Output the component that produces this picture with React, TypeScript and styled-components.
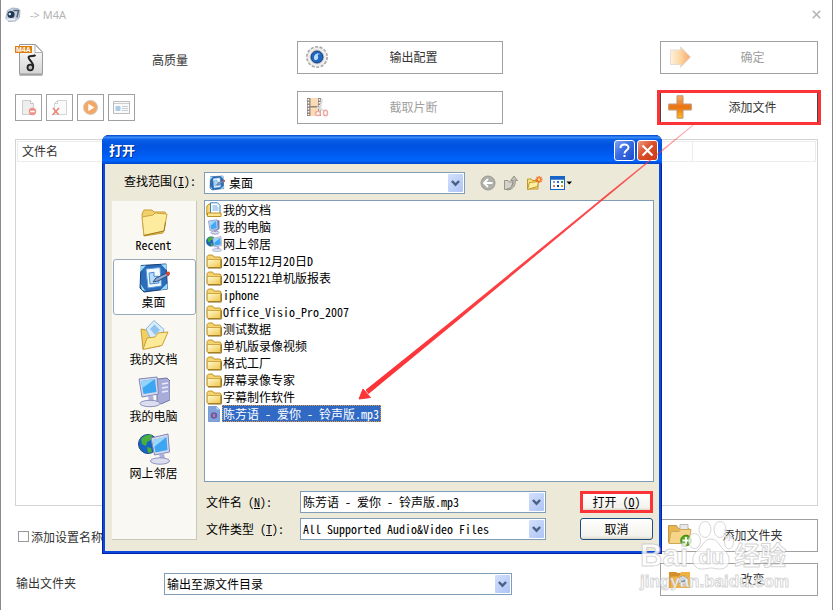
import React from "react";
import styled, { createGlobalStyle, css } from "styled-components";

const GlobalStyle = createGlobalStyle`
  *, *::before, *::after { box-sizing: border-box; }
  body {
    margin: 0;
    background: #fff;
    font-family: "Noto Sans Mono CJK SC", "Noto Sans CJK SC", sans-serif;
    font-size: 12px;
    line-height: 16px;
    color: #333;
  }
  button, input, select { font: inherit; color: inherit; margin: 0; }
  svg { display: block; }
`;

/* ---------- converter window ---------- */

const Page = styled.div`
  position: relative;
  display: flex;
  flex-direction: column;
  min-height: 100vh;
  margin-right: 1px;
  padding: 0 14px 14px;
  border: solid #8a8a8a;
  border-width: 0 1px;
`;

const TitleBar = styled.header`
  display: flex;
  align-items: center;
  gap: 9px;
  height: 29px;
  margin: 0 -4px 0 -10px;
`;

const WindowTitle = styled.h1`
  flex: 1;
  margin: 0;
  font: 11px "Noto Sans", sans-serif;
  color: #b4b4b4;
`;

const CloseWindow = styled.button`
  padding: 0 1px;
  border: 0;
  background: none;
`;

const TopGrid = styled.div`
  display: grid;
  grid-template-columns: 282px 206px 1fr 158px;
  grid-auto-rows: 33px;
  row-gap: 17px;
  align-items: center;
  padding: 12px 0 15px;
`;

const FormatInfo = styled.div`
  display: flex;
  align-items: center;
  gap: 108px;
  padding-top: 4px;
`;

const SmallTools = styled.div`
  display: flex;
  gap: 4px;
`;

const SmallButton = styled.button`
  display: grid;
  place-items: center;
  width: 27px;
  height: 27px;
  padding: 0;
  border: 1px solid #a0a0a0;
  background: #fff;
`;

const ActionButton = styled.button<{ $framed?: boolean; $end?: boolean }>`
  display: flex;
  align-items: center;
  height: 33px;
  padding: 0 4px 2px 7px;
  border: 1px solid #a0a0a0;
  background: #fff;
  color: #333;
  ${(p) => p.$end && css`grid-column: -2;`}
  ${(p) =>
    p.$framed &&
    css`
      height: 29px;
      border-color: #444;
      border-width: 0 1px;
      outline: 3px solid #fc3337;
    `}
  &:disabled { color: #a0a0a0; }
  svg { flex: none; }
`;

const ActionText = styled.span`
  flex: 1;
  text-align: center;
`;

const FilePanel = styled.section`
  flex: 1;
  min-height: 200px;
  padding: 1px;
  border: 1px solid #d3d3d3;
`;

const FileTable = styled.table`
  width: 100%;
  border-collapse: collapse;
`;

const HeadCell = styled.th<{ $narrow?: boolean }>`
  height: 20px;
  padding: 0 4px 2px;
  border: 1px solid #ececec;
  font-weight: 400;
  text-align: left;
  ${(p) => p.$narrow && css`width: 123px;`}
`;

const BottomGrid = styled.div`
  display: grid;
  grid-template-columns: 149px 348px 1fr 158px;
  grid-auto-rows: 33px;
  row-gap: 11px;
  align-items: center;
  padding-top: 13px;
`;

const CheckLabel = styled.label`
  display: flex;
  align-items: center;
  gap: 2px;
  padding: 2px 0 0 3px;
`;

const CheckBox = styled.input`
  appearance: none;
  width: 11px;
  height: 11px;
  border: 1px solid #999;
  background: #fff;
  &:checked { background: #999; }
`;

const FieldLabel = styled.label`
  padding: 7px 0 0 1px;
`;

/* ---------- shared drop-down ---------- */

const ComboBox = styled.span<{ $low?: boolean }>`
  position: relative;
  display: block;
  color: #000;
  ${(p) => p.$low && css`padding-top: 9px;`}
`;

const comboField = css<{ $icon?: boolean }>`
  display: block;
  appearance: none;
  width: 100%;
  height: 22px;
  padding: 0 20px 1px ${(p) => (p.$icon ? 24 : 2)}px;
  border: 1px solid #7f9db9;
  border-radius: 0;
  background: #fff;
  color: #000;
`;
const ComboSelect = styled.select<{ $icon?: boolean }>`${comboField}`;
const ComboInput = styled.input<{ $icon?: boolean }>`
  ${comboField}
  padding-bottom: 2px;
`;

const ComboArrow = styled.span`
  position: absolute;
  right: 2px;
  bottom: 2px;
  display: grid;
  place-items: center;
  width: 15px;
  height: 18px;
  border-radius: 1px;
  background: linear-gradient(135deg, #d3e0fd, #adc4f6);
  pointer-events: none;
`;

const ComboIcon = styled.span`
  position: absolute;
  left: 5px;
  top: 3px;
  pointer-events: none;
`;

const Arrow = () => (
  <ComboArrow>
    <svg width="9" height="7" viewBox="0 0 9 7" fill="none" stroke="#4d6185" strokeWidth="2.4">
      <path d="M.9 1 4.5 4.7 8.1 1" />
    </svg>
  </ComboArrow>
);

/* ---------- open dialog ---------- */

const Dialog = styled.div`
  position: absolute;
  top: 135px;
  left: 101px;
  right: 170px;
  min-width: 480px;
  padding: 0 3px 3px;
  border-radius: 7px 7px 0 0;
  background: #0a48de;
  box-shadow: inset 0 0 0 1px #0023a8;
  color: #000;
`;

const DialogTitle = styled.header`
  display: flex;
  align-items: center;
  gap: 2px;
  height: 29px;
  margin: 0 -3px;
  padding: 2px 4px 0 7px;
  border-radius: 7px 7px 0 0;
  background: linear-gradient(#0046c8 0, #3b8cf8 8%, #0a5fe8 16%, #0052e0 35%, #0058ec 60%, #0066fe 88%, #0045ca 100%);
`;

const DialogName = styled.h2`
  flex: 1;
  margin: 0;
  padding-bottom: 2px;
  font-size: 13px;
  font-weight: 700;
  color: #fff;
  text-shadow: 1px 1px #002a8a;
`;

const CaptionButton = styled.button<{ $close?: boolean }>`
  display: grid;
  place-items: center;
  width: 21px;
  height: 21px;
  padding: 0;
  border: 1px solid #fff;
  border-radius: 3px;
  background: ${(p) =>
    p.$close
      ? "linear-gradient(135deg, #ec9a82, #dd4f2a 45%, #c43a12)"
      : "linear-gradient(135deg, #7ea4f3, #3a6ce4 45%, #1e4bc8)"};
`;

const DialogBody = styled.div`
  display: grid;
  grid-template-columns: 85px 1fr;
  column-gap: 7px;
  row-gap: 6px;
  padding: 8px 5px 11px 7px;
  background: #ece9d8;
`;

const LookLabel = styled.label`
  padding: 1px 0 0 12px;
  white-space: nowrap;
`;

const LookRow = styled.div`
  display: flex;
  align-items: center;
  gap: 15px;
`;

const LookCombo = styled.div`
  flex: 0 1 261px;
`;

const Tools = styled.div`
  display: flex;
  align-items: center;
  gap: 7px;
`;

const ToolButton = styled.button`
  padding: 0;
  border: 0;
  background: none;
`;

const Places = styled.nav`
  display: flex;
  flex-direction: column;
  gap: 1px;
  margin-top: 1px;
  padding: 1px 0 0 1px;
  border: solid #c9c6ba;
  border-width: 0 1px 1px 0;
  background: #f9f8f3;
`;

const Place = styled.button<{ $current?: boolean }>`
  display: flex;
  flex-direction: column;
  align-items: center;
  height: 56px;
  padding: 2px 2px 0 0;
  border: 1px solid ${(p) => (p.$current ? "#98a9bb" : "transparent")};
  border-radius: 3px;
  background: ${(p) => (p.$current ? "#fff" : "none")};
  color: #000;
`;

const Main = styled.div`
  min-width: 0;
`;

const FileList = styled.ul`
  height: 282px;
  margin: 0;
  padding: 0 1px;
  overflow: auto;
  border: 1px solid #7f9db9;
  background: #fff;
  list-style: none;
`;

const FileItem = styled.li`
  display: flex;
  align-items: center;
  height: 17px;
`;

const FileName = styled.span<{ $selected?: boolean }>`
  padding: 0 2px 0 1px;
  line-height: 17px;
  white-space: pre;
  ${(p) =>
    p.$selected &&
    css`
      background: #316ac5;
      color: #fff;
      outline: 1px dotted #e0963a;
      outline-offset: -1px;
    `}
`;

const FileForm = styled.form`
  display: grid;
  grid-template-columns: 94px 1fr 73px;
  align-items: center;
  row-gap: 5px;
  padding: 9px 1px 0 2px;
`;

const FormButton = styled.button<{ $framed?: boolean }>`
  height: 22px;
  padding: 0;
  border: 1px solid #1c4f80;
  border-radius: 3px;
  background: linear-gradient(#fff, #f3f2ec 85%, #dcd8cb);
  color: #000;
  ${(p) =>
    p.$framed &&
    css`
      border: 3px solid #fc3337;
      border-radius: 0;
      line-height: 14px;
    `}
`;

const FormField = styled.div`
  min-width: 0;
  margin-right: 34px;
`;

/* ---------- overlays ---------- */

const Pointer = styled.svg`
  position: absolute;
  top: 120px;
  left: 349px;
  pointer-events: none;
`;

const Watermark = styled.div`
  position: absolute;
  right: 32px;
  bottom: 17px;
  width: 160px;
  font-family: "Liberation Sans", "Noto Sans CJK SC", sans-serif;
  font-weight: 700;
  color: rgba(255, 255, 255, 0.85);
  -webkit-text-stroke: 1px rgba(185, 185, 185, 0.6);
  pointer-events: none;
`;

const BrandLine = styled.div`
  display: flex;
  align-items: flex-end;
  font-size: 31px;
  line-height: 30px;
`;

const Paw = styled.div`
  position: relative;
  width: 46px;
  height: 50px;
`;

const PawText = styled.span`
  position: absolute;
  inset: 25px 0 0;
  font-size: 21px;
  line-height: 22px;
  text-align: center;
`;

const BrandCjk = styled.span`
  font-size: 26px;
`;

const SiteLine = styled.div`
  font-size: 17px;
  line-height: 22px;
`;

/* ---------- icons ---------- */

const AppIcon = () => (
  <svg width="16" height="16" viewBox="0 0 16 16">
    <path d="M.8 11 2.500 3.500 7 1l6 .5 2 2-.5 7-4 3.500-7 .5z" fill="#c6d1de" stroke="#93a1b2" strokeWidth=".7" />
    <circle cx="6" cy="7.500" r="3.600" fill="#213652" />
    <circle cx="4.800" cy="7" r="1.300" fill="#dbe8f5" />
    <path d="M8.500 3.500h5l-1.500 7" fill="none" stroke="#4d6078" strokeWidth="1.500" />
    <path d="M2 12.500h8" stroke="#eef3f8" strokeWidth="1.500" />
  </svg>
);

const M4aIcon = () => (
  <svg width="29" height="32" viewBox="0 0 29 32">
    <defs>
      <linearGradient id="sheet" x1="0" y1="0" x2="0" y2="1">
        <stop offset="0" stopColor="#fff" />
        <stop offset="1" stopColor="#d4d4d4" />
      </linearGradient>
    </defs>
    <path d="M4.500.5h16l7 7.500v22h-23z" fill="url(#sheet)" stroke="#9a9a9a" />
    <path d="M4.500 31h23" stroke="#777" />
    <path d="M20 .8v7.700h7.500z" fill="#fff" stroke="#b0b0b0" />
    <path d="M20.500 11c-2 1.800-4.500.2-6.500 1.500-1.500 1.500 1 3.500 2.500 5.500 1.500 2 2 4 1.500 5.500" fill="none" stroke="#222" strokeWidth="2" />
    <circle cx="15.300" cy="23.500" r="2.800" fill="#bbb" stroke="#222" strokeWidth="1.800" />
    <rect y="2" width="17" height="7" fill="#e07d0c" />
    <text x="1" y="8" fontFamily="Liberation Sans" fontWeight="700" fontSize="7" fill="#fff">M4A</text>
  </svg>
);

const RemoveIcon = () => (
  <svg width="17" height="17" viewBox="0 0 17 17">
    <path d="M2.500 1.500h8l3 3v11h-11z" fill="#eee" stroke="#ccc" />
    <path d="M10.500 1.500v3h3" fill="#fff" stroke="#c4c4c4" />
    <circle cx="12.500" cy="12.500" r="3.700" fill="#ee9083" />
    <path d="M10.300 12.500h4.400" stroke="#fff" strokeWidth="1.600" />
  </svg>
);
const ClearIcon = () => (
  <svg width="17" height="17" viewBox="0 0 17 17">
    <path d="M3.500 4.500l3-3h9v14h-12z" fill="#fafafa" stroke="#d4d4d4" />
    <path d="M3.500 4.500h3v-3" fill="none" stroke="#d0d0d0" />
    <path d="m2 9 5.500 6.500M8 9l-6.500 7" stroke="#ee8073" strokeWidth="1.500" />
  </svg>
);
const PlayIcon = () => (
  <svg width="17" height="17" viewBox="0 0 17 17">
    <circle cx="8.500" cy="8.500" r="7" fill="#f5a765" stroke="#d2c7be" />
    <path d="M6.300 4.700v7.600l6-3.800z" fill="#fff" />
  </svg>
);
const InfoIcon = () => (
  <svg width="17" height="17" viewBox="0 0 17 17">
    <path d="M.5 2.500h16v12H.5z" fill="#fafafa" stroke="#bbb" />
    <path d="M1 4.500h15" stroke="#ccc" />
    <rect x="2.500" y="7" width="5" height="5" rx="1" fill="#a9cde8" />
    <path d="M9 7.500h6M9 9.500h6M9 11.500h6" stroke="#c5cdd5" />
  </svg>
);
const GearIcon = () => (
  <svg width="24" height="24" viewBox="0 0 24 24">
    <circle cx="12" cy="12" r="10.200" fill="#e9e9e9" stroke="#aaa" strokeWidth="1.600" strokeDasharray="3 1.580" />
    <circle cx="12" cy="12" r="9" fill="#f0f0f0" />
    <circle cx="12" cy="12" r="7.400" fill="#d5d5d5" />
    <circle cx="12" cy="12" r="6" fill="#1f66c0" stroke="#16417c" />
    <path d="M9 13.500c-.5-3.500 2.500-6 6-4.500-2 0-2.500 1.200-2 2.500.4 1.400 0 3-1.600 3.600C10 15.500 9.200 14.800 9 13.500" fill="#b9dcfa" />
  </svg>
);
const FilmIcon = () => (
  <svg width="24" height="24" viewBox="0 0 24 24" opacity=".75">
    <rect x="2" y="3" width="14" height="18" fill="#6b5d55" />
    <path d="M3.500 4v16M14.500 4v16" stroke="#fff" strokeWidth="1.500" strokeDasharray="1.500 1.500" />
    <rect x="5.500" y="3" width="7.500" height="8" fill="#fcd09c" />
    <rect x="5.500" y="12.500" width="7.500" height="8.500" fill="#fcd09c" />
    <path d="m17 4-2.500 12M12 12l8 4.500" stroke="#d0d0d0" strokeWidth="1.800" />
    <g fill="#fff" stroke="#e88d84" strokeWidth="1.500">
      <ellipse cx="13" cy="18.500" rx="2.500" ry="2" />
      <ellipse cx="20.500" cy="18" rx="2" ry="2.800" />
    </g>
  </svg>
);
const OkIcon = () => (
  <svg width="24" height="24" viewBox="0 0 24 24">
    <defs>
      <linearGradient id="ok">
        <stop offset="0" stopColor="#fff1dd" />
        <stop offset=".5" stopColor="#fcd6a0" />
        <stop offset="1" stopColor="#f7a36b" />
      </linearGradient>
    </defs>
    <path d="M2.500 5h10V1.800L22.500 12l-10 10.500V19.500h-10z" fill="url(#ok)" stroke="#e6ddd6" />
  </svg>
);
const PlusIcon = () => (
  <svg width="24" height="24" viewBox="0 0 24 24">
    <defs>
      <linearGradient id="plus" x1="0" y1="0" x2="0" y2="1">
        <stop offset="0" stopColor="#fbb06a" />
        <stop offset=".5" stopColor="#ea7210" />
        <stop offset="1" stopColor="#fdbb21" />
      </linearGradient>
    </defs>
    <path d="M9 .8h6V9h8.300v6H15v8.200H9V15H.7V9H9z" fill="url(#plus)" stroke="#bd9678" />
  </svg>
);
const FolderPlusIcon = () => (
  <svg width="24" height="24" viewBox="0 0 24 24">
    <path d="M.5 2.500h8l2 3H21v14H.5z" fill="#e9b550" stroke="#c39a4a" />
    <path d="M12 1.500h8v8h-8z" fill="#e8e8e8" stroke="#bbb" />
    <path d="M3 8.500h8l1.500-2H23l-2.500 14H1z" fill="#f6d488" stroke="#cfa855" />
    <circle cx="18" cy="17.500" r="5.300" fill="#5aab1c" stroke="#3d8312" />
    <path d="M18 14v7M14.500 17.500h7" stroke="#fff" strokeWidth="2" />
  </svg>
);
const FolderGearIcon = () => (
  <svg width="24" height="24" viewBox="0 0 24 24">
    <path d="M1 5h7l1.500 1H22v15H1z" fill="#d48f2c" />
    <path d="M3 9.500h8L13 5h9v16H2z" fill="#f1b13f" />
    <circle cx="15" cy="13.500" r="4.500" fill="#dedede" stroke="#8f8f8f" strokeDasharray="2 1" />
    <circle cx="15" cy="13.500" r="2" fill="#4a78b0" />
  </svg>
);

const DesktopIcon = ({ size = 16 }: { size?: number }) => (
  <svg width={size} height={size} viewBox="0 0 32 32">
    <path d="M3 3.500 28 2l1.500 25L6 30 2 26z" fill="#2a6cb8" stroke="#173f7a" />
    <path d="M2 10V4l6-.5zM23 2.500l5.500-.3.300 6zM2.500 22l5 7L4 28zM29.500 21v6l-7 1z" fill="#9fdcf8" />
    <path d="m8 7 14-1.500 1.500 18.500L10 26z" fill="#f2faff" stroke="#5a97d8" />
    <path d="m11 11 5-.7v4h5V21l-9 1z" fill="#b9dcfa" stroke="#4a8ccf" />
    <path d="m15 20 3-4 11-5 2 2-11 6z" fill="#8fa9cf" stroke="#274f86" />
    <circle cx="30" cy="11.500" r="2" fill="#d8442b" />
  </svg>
);

const FolderIcon = ({ size = 16 }: { size?: number }) => (
  <svg width={size} height={size} viewBox="0 0 32 32">
    <defs>
      <linearGradient id="folder" x1="0" y1="0" x2="1" y2="1">
        <stop offset="0" stopColor="#fffbd0" />
        <stop offset="1" stopColor="#f0c44a" />
      </linearGradient>
    </defs>
    <path d="M2 27V7l3-3h8l3 4h12l2 2v17l-2 2H4z" fill="#f4d470" stroke="#b98a1c" strokeWidth="1.800" />
    <path d="M2.500 27V13h27v14l-2 2h-24z" fill="url(#folder)" stroke="#c2932a" strokeWidth="1.500" />
    <path d="M4 30h26.500V13" fill="none" stroke="#7c5c0c" strokeWidth="1.800" />
  </svg>
);

const BigFolderIcon = () => (
  <svg width="32" height="32" viewBox="0 0 32 32">
    <path d="M4 9 6 5h8l2 2h11l1 3-3 18-19 3z" fill="#f2d06c" stroke="#c99c34" />
    <path d="m4 12 11-2 2-2 12 1-3 17-20 4.500z" fill="#fdeb9e" stroke="#cfa540" />
    <path d="m6 30.500 20-4.500 1.500-9" fill="none" stroke="#a57c1c" />
  </svg>
);

const DocsIcon = () => (
  <svg width="32" height="32" viewBox="0 0 32 32">
    <path d="m3 10 5 1 3 3 10-4 5 3-4 14L5 30z" fill="#f2cf63" stroke="#c49a34" />
    <path d="m8 10 8-8.500 10 9-4 12-10-4z" fill="#d8ecfc" stroke="#8fb6d8" />
    <path d="m12 10 4.500-4.500L22 11l-5 5z" fill="#8fc2ec" />
    <path d="M5 30.500 9 19l8-1 3-4 10-1-6 13.500z" fill="#fdea98" stroke="#c99e38" />
  </svg>
);

const PcIcon = () => (
  <svg width="32" height="32" viewBox="0 0 32 32">
    <path d="m19 3 10-1 3 3v19l-9 4-4-2z" fill="#a7acd8" stroke="#7278aa" />
    <path d="m24 8 6-1M24 12l6-1M24 16l6-1" stroke="#e9ebfa" strokeWidth="1.500" />
    <path d="m1 3 18-2 1.500 17L4 21z" fill="#d7d9ee" stroke="#7f86b8" />
    <path d="m3 5 14-2 1.500 13L5.500 18z" fill="#3ca6f2" />
    <path d="m3 5 14-2L4.500 12z" fill="#92d4fb" />
    <path d="m10 20 5-.500 1 6h-5z" fill="#aeb2da" />
    <ellipse cx="12" cy="27.500" rx="10" ry="3.200" fill="#dcdef0" stroke="#8d93be" />
  </svg>
);

const PcSmall = () => (
  <svg width="16" height="16" viewBox="0 0 16 16">
    <path d="m11 1 2.500.5V10L10 12z" fill="#6f78b8" />
    <path d="M2.500 2 11 .8l1 9.200-8 1.500z" fill="#d5dcf2" stroke="#8a93c4" strokeWidth=".8" />
    <path d="m3.800 3 6.200-1 .8 7.200-5.800 1z" fill="#41a8f2" />
    <path d="m3.800 3 6.200-1-5.600 5z" fill="#9ad8fb" />
    <ellipse cx="9" cy="13.500" rx="4" ry="1.700" fill="#dcdef0" stroke="#8288b5" strokeWidth=".8" />
    <path d="M8 11h2v2H8z" fill="#9ba1ce" />
  </svg>
);

const NetworkIcon = ({ size = 32 }: { size?: number }) => (
  <svg width={size} height={size} viewBox="0 0 32 32">
    <circle cx="10" cy="11" r="9.500" fill="#1765c0" stroke="#174a8c" />
    <path d="M3 6c3-4 8-5 11-4l-1 5-4 2-1 4-4-2zM9 14l4 1 1 4-4 1z" fill="#49b03c" />
    <path d="m13 5 17-4 1.500 18-15 3z" fill="#d7d9ee" stroke="#7f86b8" />
    <path d="m15 7 13.500-3 1 13L17.500 19.500z" fill="#3ca6f2" />
    <path d="M15 7 28.500 4 16 14z" fill="#9ad8fb" />
    <path d="m21 21 5-1 1 6h-5z" fill="#aeb2da" />
    <ellipse cx="22" cy="28" rx="9.500" ry="3.200" fill="#dcdef0" stroke="#8d93be" />
  </svg>
);

const DocFolderSmall = () => (
  <svg width="16" height="16" viewBox="0 0 16 16">
    <path d="M.8 4 3 2h3v12H2l-1.200-1z" fill="#f6da78" stroke="#bd901f" />
    <path d="M4.500.8h7l2.500 2.500v9H4.500z" fill="#fff" stroke="#3d7fc4" />
    <path d="M6.500 4h5M6.500 6h6M6.500 8h6" stroke="#68a5df" />
    <path d="M1.500 14.500V11H15v3.500z" fill="#fbe590" stroke="#bd901f" />
  </svg>
);

const AudioSmall = () => (
  <svg width="16" height="16" viewBox="0 0 16 16">
    <path d="M2.500.5h8l3 3v12h-11z" fill="#7fa3dc" stroke="#7f9ccc" />
    <path d="M10.500.5v3h3z" fill="#c9dbf5" />
    <circle cx="8" cy="9.500" r="3.300" fill="#735b9d" />
    <path d="M8 8v3" stroke="#c7b3dc" />
  </svg>
);

const BackIcon = () => (
  <svg width="16" height="16" viewBox="0 0 16 16">
    <circle cx="8" cy="8" r="7" fill="#b0b0aa" stroke="#999992" />
    <path d="M12.500 8H4.500M8 4 4 8l4 4" fill="none" stroke="#fff" strokeWidth="1.800" />
  </svg>
);
const UpIcon = () => (
  <svg width="16" height="16" viewBox="0 0 16 16">
    <path d="M1.500 14.500v-9H5L6 7h4l-2 7z" fill="#d4d3c9" stroke="#96958b" />
    <path d="M4 14c5-1 6-3.500 6-8.500H7.500L11 1l3.500 4.500h-2.200C12.500 11 10 14.500 4 15z" fill="#c0bfb5" stroke="#86857c" strokeWidth=".8" />
  </svg>
);
const NewFolderIcon = () => (
  <svg width="17" height="16" viewBox="0 0 17 16">
    <path d="M1.500 14V4h4l1 1.500H12V14z" fill="#f8e07c" stroke="#c29827" />
    <path d="m1.500 14.500 2-7 9-1-1 5z" fill="#fdf0a5" stroke="#c29827" />
    <path d="M13 1v7M9.500 4.500h7M10.500 2l5 5M15.500 2l-5 5" stroke="#f26a29" strokeWidth="1.300" />
    <circle cx="13" cy="4.500" r="1.200" fill="#ffe36a" />
  </svg>
);
const ViewIcon = () => (
  <svg width="22" height="16" viewBox="0 0 22 16">
    <rect x=".5" y="1.500" width="14" height="13" fill="#fff" stroke="#1764c8" />
    <path d="M0 3h15" stroke="#1764c8" strokeWidth="3.500" />
    <path d="M3 7h2" stroke="#8a9bc0" strokeWidth="2" />
    <path d="M3 11h2" stroke="#e0795c" strokeWidth="2" />
    <path d="M7 7h2" stroke="#2b6cce" strokeWidth="2" />
    <path d="M7 11h2" stroke="#0c3aa2" strokeWidth="2" />
    <path d="M11 7h2" stroke="#2f9c3a" strokeWidth="2" />
    <path d="M11 11h2" stroke="#d8a318" strokeWidth="2" />
    <path d="M16.500 6.500h5.500l-2.700 3z" fill="#000" />
  </svg>
);

/* ---------- data ---------- */

const files = [
  { name: "我的文档", icon: <DocFolderSmall /> },
  { name: "我的电脑", icon: <PcSmall /> },
  { name: "网上邻居", icon: <NetworkIcon size={16} /> },
  ...[
    "2015年12月20日D",
    "20151221单机版报表",
    "iphone",
    "Office_Visio_Pro_2007",
    "测试数据",
    "单机版录像视频",
    "格式工厂",
    "屏幕录像专家",
    "字幕制作软件",
  ].map((name) => ({ name, icon: <FolderIcon /> })),
  { name: "陈芳语 - 爱你 - 铃声版.mp3", icon: <AudioSmall />, selected: true },
] as { name: string; icon: React.ReactNode; selected?: boolean }[];

const places = [
  { name: "Recent", icon: <BigFolderIcon /> },
  { name: "桌面", icon: <DesktopIcon size={32} />, current: true },
  { name: "我的文档", icon: <DocsIcon /> },
  { name: "我的电脑", icon: <PcIcon /> },
  { name: "网上邻居", icon: <NetworkIcon /> },
] as { name: string; icon: React.ReactNode; current?: boolean }[];

const OpenDialog = () => (
  <Dialog role="dialog" aria-labelledby="open-title">
    <DialogTitle>
      <DialogName id="open-title">打开</DialogName>
      <CaptionButton aria-label="帮助">
        <svg width="13" height="15" viewBox="0 0 13 15" fill="none" stroke="#fff" strokeWidth="2">
          <path d="M2.500 5c0-4.500 8-4.500 8-.5 0 2.700-4 3-4 6M6.500 12v2" />
        </svg>
      </CaptionButton>
      <CaptionButton $close aria-label="关闭">
        <svg width="13" height="13" viewBox="0 0 13 13" stroke="#fff" strokeWidth="2.200">
          <path d="m1.500 1.500 10 10M11.500 1.500l-10 10" />
        </svg>
      </CaptionButton>
    </DialogTitle>
    <DialogBody>
      <LookLabel htmlFor="look-in">查找范围(<u>I</u>):</LookLabel>
      <LookRow>
        <LookCombo>
          <ComboBox>
            <ComboSelect $icon id="look-in"><option>桌面</option></ComboSelect>
            <ComboIcon><DesktopIcon /></ComboIcon>
            <Arrow />
          </ComboBox>
        </LookCombo>
        <Tools>
          <ToolButton aria-label="后退"><BackIcon /></ToolButton>
          <ToolButton aria-label="向上"><UpIcon /></ToolButton>
          <ToolButton aria-label="新建文件夹"><NewFolderIcon /></ToolButton>
          <ToolButton aria-label="查看"><ViewIcon /></ToolButton>
        </Tools>
      </LookRow>
      <Places>
        {places.map((p) => (
          <Place key={p.name} $current={p.current}>{p.icon}{p.name}</Place>
        ))}
      </Places>
      <Main>
        <FileList>
          {files.map((f) => (
            <FileItem key={f.name}>
              {f.icon}
              <FileName $selected={f.selected}>{f.name}</FileName>
            </FileItem>
          ))}
        </FileList>
        <FileForm onSubmit={(e) => e.preventDefault()}>
          <label htmlFor="file-name">文件名 (<u>N</u>):</label>
          <FormField>
            <ComboBox>
              <ComboInput id="file-name" defaultValue="陈芳语 - 爱你 - 铃声版.mp3" />
              <Arrow />
            </ComboBox>
          </FormField>
          <FormButton $framed>打开 (<u>O</u>)</FormButton>
          <label htmlFor="file-type">文件类型 (<u>T</u>):</label>
          <FormField>
            <ComboBox>
              <ComboSelect id="file-type"><option>All Supported Audio&amp;Video Files</option></ComboSelect>
              <Arrow />
            </ComboBox>
          </FormField>
          <FormButton type="button">取消</FormButton>
        </FileForm>
      </Main>
    </DialogBody>
  </Dialog>
);

export default function App() {
  return (
    <>
      <GlobalStyle />
      <Page>
        <TitleBar>
          <AppIcon />
          <WindowTitle>-&gt; M4A</WindowTitle>
          <CloseWindow aria-label="关闭窗口">
            <svg width="9" height="9" viewBox="0 0 9 9" stroke="#b4b4b4" strokeWidth="1.600">
              <path d="m.8.8 7.400 7.400M8.200.8.8 8.200" />
            </svg>
          </CloseWindow>
        </TitleBar>

        <TopGrid>
          <FormatInfo><M4aIcon />高质量</FormatInfo>
          <ActionButton><GearIcon /><ActionText>输出配置</ActionText></ActionButton>
          <ActionButton $end disabled><OkIcon /><ActionText>确定</ActionText></ActionButton>
          <SmallTools>
            <SmallButton disabled aria-label="移除"><RemoveIcon /></SmallButton>
            <SmallButton disabled aria-label="清空列表"><ClearIcon /></SmallButton>
            <SmallButton disabled aria-label="播放"><PlayIcon /></SmallButton>
            <SmallButton disabled aria-label="文件信息"><InfoIcon /></SmallButton>
          </SmallTools>
          <ActionButton disabled><FilmIcon /><ActionText>截取片断</ActionText></ActionButton>
          <ActionButton $end $framed><PlusIcon /><ActionText>添加文件</ActionText></ActionButton>
        </TopGrid>

        <FilePanel>
          <FileTable>
            <thead>
              <tr>
                <HeadCell scope="col">文件名</HeadCell>
                <HeadCell scope="col" $narrow />
              </tr>
            </thead>
          </FileTable>
        </FilePanel>

        <BottomGrid>
          <CheckLabel><CheckBox type="checkbox" />添加设置名称</CheckLabel>
          <ActionButton $end><FolderPlusIcon /><ActionText>添加文件夹</ActionText></ActionButton>
          <FieldLabel htmlFor="out-folder">输出文件夹</FieldLabel>
          <ComboBox $low>
            <ComboSelect id="out-folder"><option>输出至源文件目录</option></ComboSelect>
            <Arrow />
          </ComboBox>
          <ActionButton $end><FolderGearIcon /><ActionText>改变</ActionText></ActionButton>
        </BottomGrid>

        <OpenDialog />

        <Pointer width="350" height="285" viewBox="0 0 350 285">
          <defs>
            <linearGradient id="fade" x1="1" y1="0" x2="0" y2="1">
              <stop offset="0" stopColor="#fc3337" stopOpacity=".35" />
              <stop offset=".25" stopColor="#fc3337" stopOpacity=".9" />
              <stop offset="1" stopColor="#fc3337" />
            </linearGradient>
          </defs>
          <path d="M343 4.600 249.500 80.500 104 199 15.500 270l3 4L106 202 250.500 82 343.500 5.400z" fill="url(#fade)" />
          <path d="m9 279 4-10 7.500 8.500z" fill="#fc3337" stroke="#fc3337" strokeLinejoin="round" />
        </Pointer>

        <Watermark>
          <BrandLine>
            Bai
            <Paw>
              <svg width="46" height="50" viewBox="0 0 46 50" fill="#fff" fillOpacity=".75" stroke="#bbb" strokeOpacity=".6">
                <ellipse cx="6.500" cy="20" rx="6" ry="7.500" />
                <ellipse cx="17" cy="8.500" rx="6" ry="8" />
                <ellipse cx="32" cy="8.500" rx="6" ry="8" />
                <ellipse cx="41" cy="21" rx="4.500" ry="7" />
                <path d="M23 18c7 0 8 7 14 12 7 6 5 18-5 18-4 0-6-1-9-1s-5 1-9 1C4 48 2 36 9 30c6-5 7-12 14-12z" />
              </svg>
              <PawText>du</PawText>
            </Paw>
            <BrandCjk>经验</BrandCjk>
          </BrandLine>
          <SiteLine>jingyan.baidu.com</SiteLine>
        </Watermark>
      </Page>
    </>
  );
}
